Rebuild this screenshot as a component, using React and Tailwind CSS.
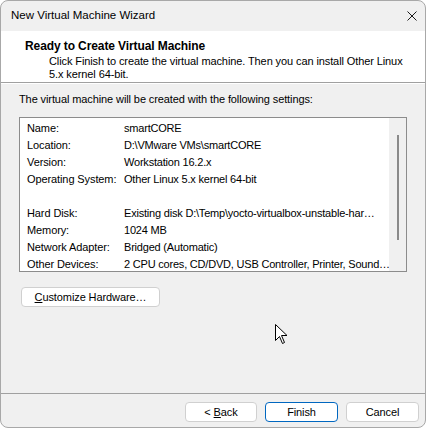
import React from 'react';

const rows = [
  ['Name:', 'smartCORE'],
  ['Location:', 'D:\\VMware VMs\\smartCORE'],
  ['Version:', 'Workstation 16.2.x'],
  ['Operating System:', 'Other Linux 5.x kernel 64-bit'],
  ['', ''],
  ['Hard Disk:', 'Existing disk D:\\Temp\\yocto-virtualbox-unstable-har…'],
  ['Memory:', '1024 MB'],
  ['Network Adapter:', 'Bridged (Automatic)'],
  ['Other Devices:', '2 CPU cores, CD/DVD, USB Controller, Printer, Sound…'],
];

// Plain dialog push button
const DialogButton = ({ children, primary = false, className = '' }) => (
  <button
    className={
      'h-[20px] rounded-[4px] bg-white text-[11px] leading-none text-black flex items-center justify-center ' +
      (primary ? 'border border-[#0067c0] ' : 'border border-[#d0d0d0] ') +
      className
    }
  >
    {children}
  </button>
);

export default function App() {
  return (
    <div className="w-[428px] h-[430px] bg-white font-['Liberation_Sans',sans-serif] text-[11px] tracking-[-0.1px] text-black">
      <div className="w-[426px] h-[428px] rounded-[8px] border border-[#a8a8a8] bg-[#f0f0f0] overflow-hidden flex flex-col relative">
        {/* Title bar */}
        <div className="h-[30px] shrink-0 flex items-center justify-between pl-[10px] pr-[8px]">
          <span className="text-[11.5px] tracking-normal">New Virtual Machine Wizard</span>
          <svg width="10" height="10" viewBox="0 0 10 10">
            <path d="M0.5 0.5 L9.5 9.5 M9.5 0.5 L0.5 9.5" stroke="#1a1a1a" strokeWidth="1" />
          </svg>
        </div>

        {/* Header */}
        <div className="h-[52px] shrink-0 bg-white pl-[24px] pt-[7px] border-b border-[#a0a0a0]">
          <div className="font-bold text-[12px] leading-[16px]">Ready to Create Virtual Machine</div>
          <div className="pl-[24px] pr-[8px] leading-[13px] mt-[1px]">
            Click Finish to create the virtual machine. Then you can install Other Linux 5.x kernel 64-bit.
          </div>
        </div>
        <div className="h-px bg-white shrink-0" />

        {/* Body */}
        <div className="flex-1 flex flex-col px-[18px] pt-[7px]">
          <div className="leading-[16px]">The virtual machine will be created with the following settings:</div>
          <div className="mt-[10px] h-[155px] border border-[#8c8c8c] bg-white flex overflow-hidden">
            <div className="flex-1 pt-[2px] pl-[7px] overflow-hidden">
              {rows.map(([label, value], i) => (
                <div key={i} className="flex h-[17px] items-center whitespace-nowrap">
                  <span className="w-[97px] shrink-0">{label}</span>
                  <span className="tracking-[-0.2px]">{value}</span>
                </div>
              ))}
            </div>
            <div className="w-[17px] shrink-0 bg-[#f0f0f0] pt-[17px] flex justify-center">
              <div className="w-[2px] h-[105px] bg-[#8a8a8a]" />
            </div>
          </div>
          <div className="mt-[15px] pl-[2px]">
            <DialogButton className="w-[139px]">
              <span><span className="underline">C</span>ustomize Hardware…</span>
            </DialogButton>
          </div>
        </div>

        {/* Footer */}
        <div className="h-px bg-[#a0a0a0] shrink-0" />
        <div className="h-[33px] shrink-0 flex justify-end items-start gap-[8px] pt-[8px] pr-[6px]">
          <DialogButton className="w-[72px]">
            <span>&lt; <span className="underline">B</span>ack</span>
          </DialogButton>
          <DialogButton primary className="w-[73px]">Finish</DialogButton>
          <DialogButton className="w-[73px]">Cancel</DialogButton>
        </div>

        {/* Mouse pointer */}
        <svg className="absolute left-[274px] top-[323px]" width="13" height="21" viewBox="0 0 13 21">
          <path d="M0.5 0.5 L0.5 16.5 L4.5 12.5 L7.5 19.5 L9.5 18.5 L6.5 11.5 L12 11.5 Z" fill="#fff" stroke="#000" strokeWidth="1" strokeLinejoin="round" />
        </svg>
      </div>
    </div>
  );
}
